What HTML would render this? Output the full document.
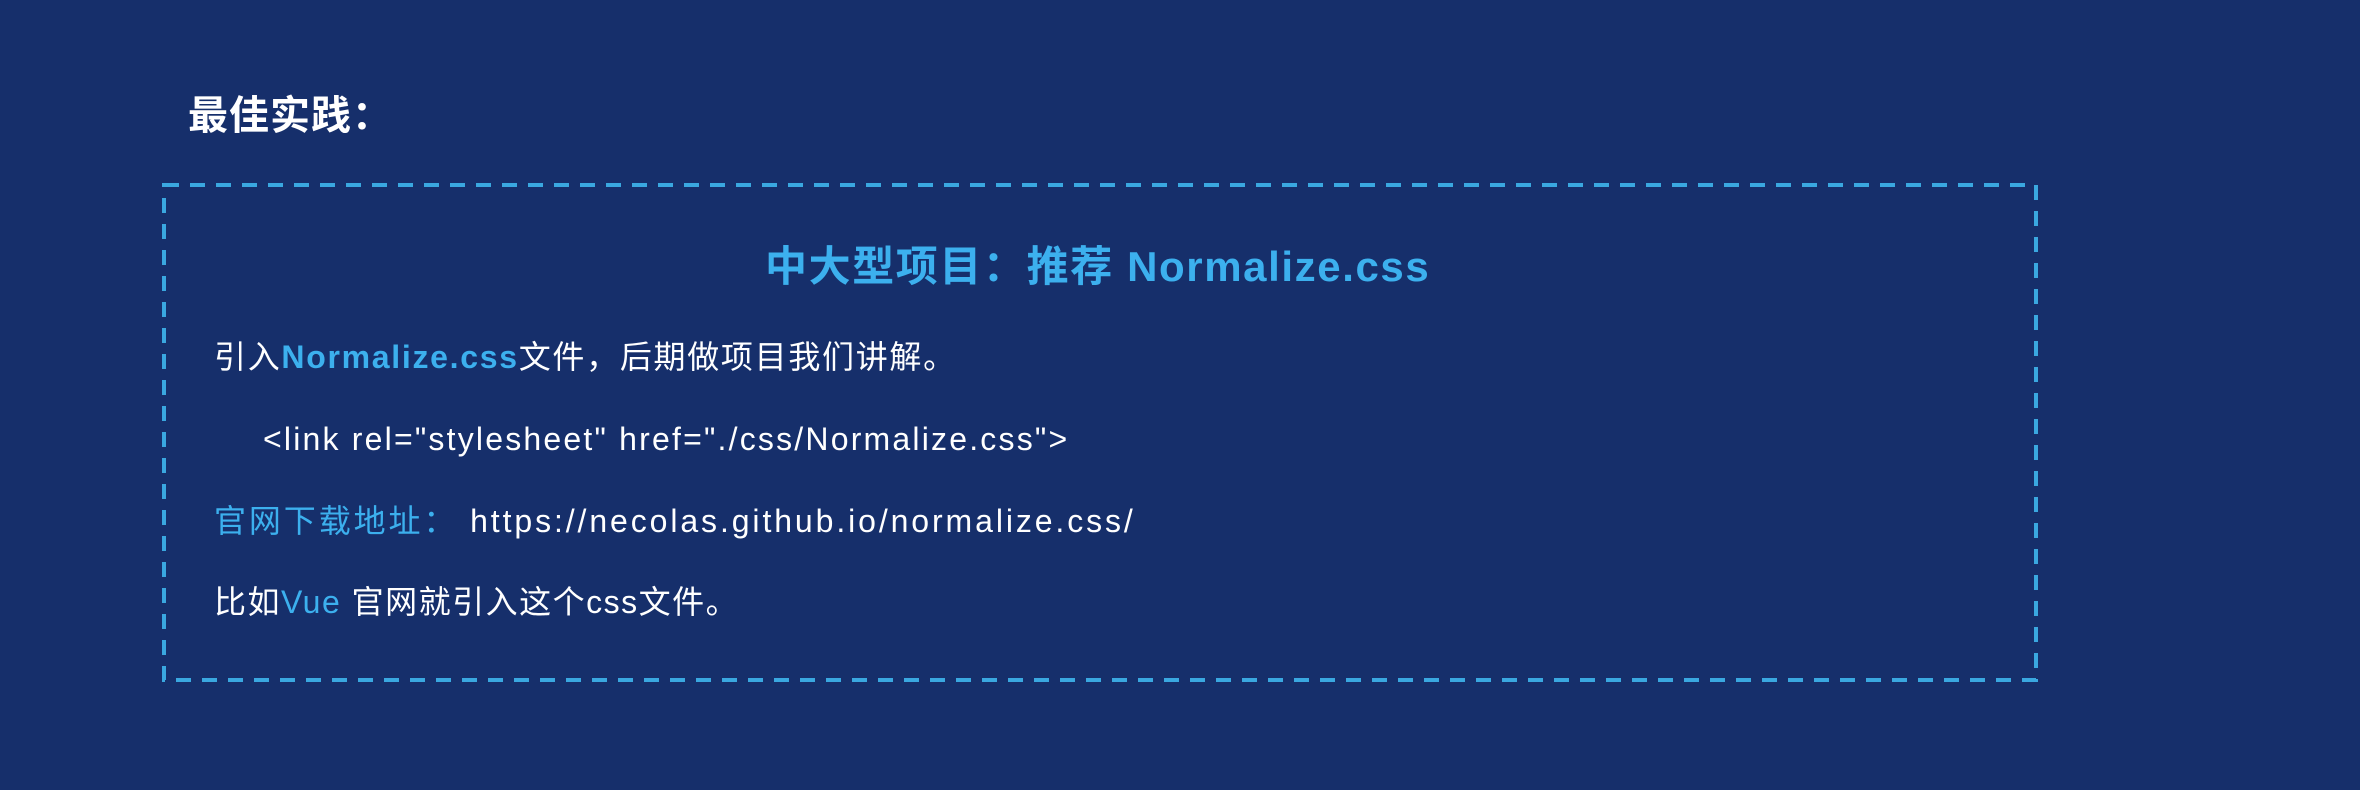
<!DOCTYPE html>
<html><head><meta charset="utf-8"><style>
html,body{margin:0;padding:0}
body{width:2360px;height:790px;background:#162f6b;position:relative;overflow:hidden;font-family:"Liberation Sans","Noto Sans CJK SC",sans-serif;color:#fff}
.t{position:absolute;white-space:nowrap;line-height:1}
.b{color:#3cb0ee}
</style></head><body>
<div class="t" style="left:188px;top:96px;font-size:40px;font-weight:bold;letter-spacing:1px">最佳实践：</div>
<svg style="position:absolute;left:0;top:0" width="2360" height="790"><rect x="164" y="185" width="1872" height="495" fill="none" stroke="#3aa8e0" stroke-width="4" stroke-dasharray="15 11"/></svg>
<div class="t b" style="left:765px;top:246px;font-size:42px;font-weight:bold;letter-spacing:1.6px">中大型项目：推荐 Normalize.css</div>
<div class="t" style="left:214px;top:341px;font-size:32px;letter-spacing:1.7px">引入<span class="b" style="font-weight:bold">Normalize.css</span>文件，后期做项目我们讲解。</div>
<div class="t" style="left:263px;top:423px;font-size:32px;letter-spacing:2.2px">&lt;link rel="stylesheet" href="./css/Normalize.css"&gt;</div>
<div class="t" style="left:214px;top:505px;font-size:32px;letter-spacing:2.9px"><span class="b">官网下载地址：</span> https://necolas.github.io/normalize.css/</div>
<div class="t" style="left:214px;top:586px;font-size:32px;letter-spacing:1.5px">比如<span class="b">Vue</span> 官网就引入这个css文件。</div>
</body></html>
